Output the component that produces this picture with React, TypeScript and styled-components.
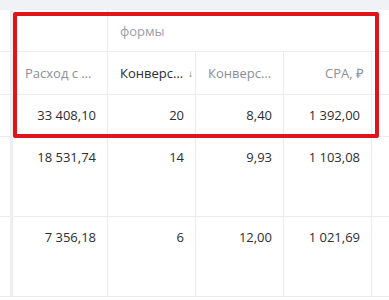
import styled, {createGlobalStyle} from "styled-components";

const GlobalStyle = createGlobalStyle`
    html, body {
        margin: 0;
        padding: 0;
        background: #ffffff;
    }
    body {
        font-family: "Open Sans", "Liberation Sans", sans-serif;
        -webkit-font-smoothing: antialiased;
    }
`

type Row = {
    spend: string,
    conversions: string,
    rate: string,
    cpa: string,
    height: number,
}

const rows: Row[] = [
    {spend: "33 408,10", conversions: "20", rate: "8,40", cpa: "1 392,00", height: 42},
    {spend: "18 531,74", conversions: "14", rate: "9,93", cpa: "1 103,08", height: 80},
    {spend: "7 356,18", conversions: "6", rate: "12,00", cpa: "1 021,69", height: 80},
]

const App = () => {
    return <>
        <GlobalStyle/>
        <Page>
            <TopStrip/>
            <TableWrap>
                <Table>
                    <FrozenCell $height={42}/>
                    <HeadCell $height={42}/>
                    <GroupCell>формы</GroupCell>

                    <FrozenCell $height={43}/>
                    <HeadCell $height={43}>Расход с …</HeadCell>
                    <HeadCell $height={43} $active>
                        Конверс…
                        <SortArrow>↓</SortArrow>
                    </HeadCell>
                    <HeadCell $height={43}>Конверс…</HeadCell>
                    <HeadCell $height={43} $right>CPA, ₽</HeadCell>
                    <HeadCell $height={43}/>

                    {rows.map((row, i) => <RowGroup key={i}>
                        <FrozenCell $height={row.height}/>
                        <NumCell $height={row.height}>{row.spend}</NumCell>
                        <NumCell $height={row.height}>{row.conversions}</NumCell>
                        <NumCell $height={row.height}>{row.rate}</NumCell>
                        <NumCell $height={row.height}>{row.cpa}</NumCell>
                        <NumCell $height={row.height}/>
                    </RowGroup>)}
                </Table>
                <Highlight/>
            </TableWrap>
        </Page>
    </>
}

const Page = styled.div`
    width: 389px;
    height: 300px;
    overflow: hidden;
    display: flex;
    flex-direction: column;
    background: #ffffff;
`

const TopStrip = styled.div`
    height: 10px;
    flex: none;
    background: #f1f2f5;
`

const TableWrap = styled.div`
    position: relative;
    flex: 1;
`

const Table = styled.div`
    display: grid;
    grid-template-columns: 13px 95px 88px 88px 88px 60px;
    width: 432px;
`

const RowGroup = styled.div`
    display: contents;
`

const BaseCell = styled.div<{ $height?: number }>`
    box-sizing: border-box;
    height: ${props => props.$height ?? 42}px;
    border-bottom: 1px solid #ebecf0;
    border-right: 1px solid #ebecf0;
    font-size: 13px;
    line-height: 20px;
    white-space: nowrap;
    overflow: hidden;
`

const FrozenCell = styled(BaseCell)`
    border-right: 3px solid #eceef2;
`

const HeadCell = styled(BaseCell)<{ $active?: boolean, $right?: boolean }>`
    display: flex;
    align-items: center;
    justify-content: ${props => props.$right ? "flex-end" : "flex-start"};
    padding: ${props => props.$right ? "0 7px 0 12px" : "0 2px 0 12px"};
    color: ${props => props.$active ? "#2b2d33" : "#8b8f99"};
`

const GroupCell = styled(BaseCell)`
    grid-column: 3 / 7;
    height: 42px;
    display: flex;
    align-items: center;
    padding: 0 12px;
    color: #9a9ea7;
`

const SortArrow = styled.span`
    margin-left: 5px;
    font-size: 10px;
    line-height: 10px;
    color: #6f737c;
`

const NumCell = styled(BaseCell)`
    padding: 10px 11px 0 8px;
    text-align: right;
    color: #2b2d33;
`

const Highlight = styled.div`
    position: absolute;
    left: 13px;
    top: 2px;
    width: 366px;
    height: 126px;
    box-sizing: border-box;
    border: 4px solid #e0141a;
    border-radius: 2px;
    pointer-events: none;
`

export default App
